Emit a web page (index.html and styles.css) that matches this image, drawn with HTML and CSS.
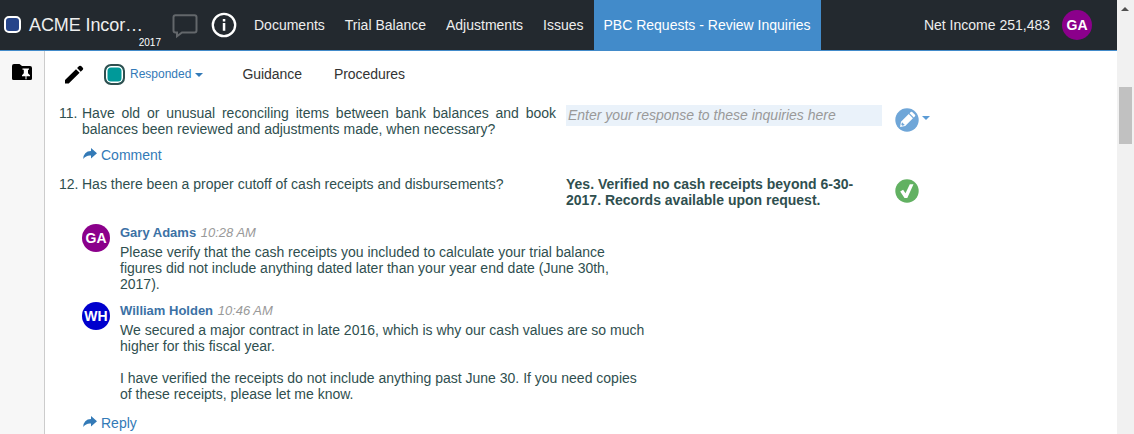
FILE: index.html
```html
<!DOCTYPE html>
<html lang="en">
<head>
<meta charset="utf-8">
<title>PBC Requests - Review Inquiries</title>
<link rel="stylesheet" href="styles.css">
</head>
<body>
<div class="app">
  <header class="topbar">
    <span class="entity-mark"></span>
    <div class="entity"><span class="entity-name">ACME Incor…</span><span class="entity-year">2017</span></div>
    <svg class="icon-chat" width="26" height="25" viewBox="0 0 26 25"><path d="M3.500 1.200h19q2 0 2 2v13.200q0 2-2 2H10L5 22.300V18.400H3.500q-2 0-2-2V3.200q0-2 2-2z" fill="none" stroke="#63676b" stroke-width="2"/></svg>
    <svg class="icon-info" width="26" height="26" viewBox="0 0 26 26"><circle cx="13" cy="13" r="11.200" fill="none" stroke="#fff" stroke-width="2.300"/><path d="M11.800 7h2.500v2.400h-2.500zM11.800 11.100h2.500v7.600h-2.500z" fill="#fff"/></svg>
    <nav class="nav">
      <a>Documents</a><a>Trial Balance</a><a>Adjustments</a><a>Issues</a><a class="active">PBC Requests - Review Inquiries</a>
    </nav>
    <span class="net-income">Net Income 251,483</span>
    <span class="avatar avatar-top">GA</span>
  </header>
  <div class="body">
    <aside class="sidebar">
      <svg width="20" height="17" viewBox="0 0 20 17"><path d="M2 0h5.500l2.500 2h8q2 0 2 2v10.500q0 1.500-1.500 1.500h-17Q0 16 0 14.500V2Q0 0 2 0z" fill="#000"/><path d="M10.500 4.500h6.500v1.200h-1v3.600l2 2v.9h-3.500v3h-1v-3H10v-.9l1.800-2V5.700h-1.300z" fill="#fff"/></svg>
    </aside>
    <main class="main">
      <div class="toolbar">
        <svg class="icon-pencil" width="19" height="19" viewBox="0 0 19 19"><path d="M0 14.900 11 4.200 14.600 7.800 3.700 18.500H0zM12.100 3.100l2-2q1-.9 2 0l1.700 1.700q.9 1 0 2l-2.100 1.900z" fill="#000"/></svg>
        <span class="status-swatch"></span>
        <span class="status-label">Responded</span><span class="caret"></span>
        <span class="tool guidance">Guidance</span><span class="tool">Procedures</span>
      </div>
      <section class="inquiry first">
        <span class="num">11.</span>
        <div class="question">Have old or unusual reconciling items between bank balances and book balances been reviewed and adjustments made, when necessary?</div>
        <div class="response placeholder">Enter your response to these inquiries here</div>
        <div class="state">
          <svg width="24" height="24" viewBox="0 0 24 24"><circle cx="12" cy="12" r="11.700" fill="#6fa6d8"/><g transform="translate(12 12) rotate(45)"><path d="M-3-8.300q0-1 1-1h4q1 0 1 1v1.700h-6zM-3-5.400h6V5.500L0 9.800l-3-4.300z" fill="#fff"/><path d="M-2 5.100h4L.7 7.300H-.7z" fill="#6fa6d8"/></g></svg>
          <span class="caret"></span>
        </div>
      </section>
      <a class="action"><svg width="14" height="12" viewBox="0 0 14 12"><path d="M8 0 14 5.300 8 10.600V7.500Q3 7 .2 11 .5 3.200 8 2.900z" fill="#337ab7"/></svg>Comment</a>
      <section class="inquiry second">
        <span class="num">12.</span>
        <div class="question">Has there been a proper cutoff of cash receipts and disbursements?</div>
        <div class="response answer">Yes. Verified no cash receipts beyond 6-30-<br>2017. Records available upon request.</div>
        <div class="state">
          <svg width="24" height="24" viewBox="0 0 24 24"><circle cx="12" cy="12" r="11.700" fill="#62b162"/><path d="M5.200 12.600l2.900-1.800 2.400 3.400 4.300-9h3.700L12.300 19H9.500z" fill="#fff"/></svg>
        </div>
      </section>
      <article class="comment">
        <span class="avatar">GA</span>
        <div class="comment-body">
          <div class="byline"><b>Gary Adams</b> <i>10:28 AM</i></div>
          <p>Please verify that the cash receipts you included to calculate your trial balance<br>figures did not include anything dated later than your year end date (June 30th,<br>2017).</p>
        </div>
      </article>
      <article class="comment">
        <span class="avatar avatar-blue">WH</span>
        <div class="comment-body">
          <div class="byline"><b>William Holden</b> <i>10:46 AM</i></div>
          <p>We secured a major contract in late 2016, which is why our cash values are so much<br>higher for this fiscal year.</p>
          <p>I have verified the receipts do not include anything past June 30. If you need copies<br>of these receipts, please let me know.</p>
        </div>
      </article>
      <a class="action"><svg width="14" height="12" viewBox="0 0 14 12"><path d="M8 0 14 5.300 8 10.600V7.500Q3 7 .2 11 .5 3.200 8 2.900z" fill="#337ab7"/></svg>Reply</a>
    </main>
  </div>
</div>
<div class="scrollbar"><span class="scroll-up"></span><span class="scroll-thumb"></span></div>
</body>
</html>
```
FILE: styles.css
```css
* { box-sizing: border-box; }
body {
  margin: 0;
  width: 1134px;
  height: 434px;
  display: flex;
  overflow: hidden;
  background: #fff;
  color: #2f4f4f;
  font: 14px/16px "Liberation Sans", Arial, sans-serif;
}
.app { width: 1117px; height: 434px; display: flex; flex-direction: column; }
.topbar {
  height: 51px;
  flex: none;
  display: flex;
  align-items: center;
  background: #23292f;
  border-bottom: 1px solid #428bca;
  color: #eee;
}
.entity-mark {
  width: 17px; height: 17px;
  margin: 0 8px 2px 4px;
  border: 2px solid #fff;
  border-radius: 5px;
  background: #27458a;
}
.entity { width: 132px; height: 50px; display: flex; flex-direction: column; padding-top: 15px; }
.entity-name { font-size: 18px; line-height: 20px; white-space: nowrap; letter-spacing: -0.1px; }
.entity-year { font-size: 10px; line-height: 12px; padding-top: 2px; align-self: flex-end; color: #fff; }
.icon-chat { margin: 3px 0 0 11px; }
.icon-info { margin: 0 0 0 13px; }
.nav { display: flex; height: 51px; align-self: flex-start; margin-left: 7px; }
.nav a { padding: 17px 10px 0; white-space: nowrap; }
.nav .active { background: #428bca; color: #fff; }
.net-income { margin-left: auto; }
.avatar {
  width: 28px; height: 28px;
  flex: none;
  display: flex;
  align-items: center;
  justify-content: center;
  border-radius: 50%;
  background: #8b008b;
  color: #fff;
  font-weight: bold;
}
.avatar-top { width: 30px; height: 30px; margin: 0 25px 0 12px; }
.avatar-blue { background: #0000cd; }
.body { flex: 1; display: flex; min-height: 0; }
.sidebar { width: 45px; background: #f7f7f7; border-right: 1px solid #ccc; padding: 13px 0 0 12px; }
.main { flex: 1; min-width: 0; }
.toolbar { display: flex; align-items: center; height: 46px; padding-left: 20px; color: #333; }
.status-swatch {
  width: 21px; height: 21px;
  margin-left: 20px;
  border: 2px solid #2f4f4f;
  border-radius: 7px;
  background: #009999;
  box-shadow: inset 0 0 0 1.5px #fff;
}
.status-label { margin-left: 5px; font-size: 12px; color: #337ab7; }
.caret { border: 4px solid transparent; border-top-color: #337ab7; border-bottom: 0; margin: 2px 0 0 4px; }
.guidance { margin-left: 39px; margin-right: 32px; }
.tool { letter-spacing: -0.05px; }
.inquiry { display: grid; grid-template-columns: 23px 474px 316px 40px; padding-left: 14px; }
.first { padding-top: 8px; height: 46px; }
.second { margin-top: 13px; height: 48px; }
.question { text-align: justify; }
.response { margin-left: 10px; width: 316px; }
.placeholder { height: 21px; padding: 2px; background: #eaf2fa; color: #999; font-style: italic; }
.answer { font-weight: bold; }
.state { display: flex; align-items: flex-start; padding: 3px 0 0 23px; }
.state svg { flex: none; }
.state .caret { margin: 8px 0 0 3px; border-top-color: #5b9bd5; }
.action { display: flex; gap: 4px; margin: 4px 0 0 38px; color: #337ab7; }
.action svg { margin-top: 1px; }
.comment { display: flex; gap: 10px; padding-left: 37px; }
.comment + .comment { margin-top: 10px; }
.byline { padding-top: 1px; margin-bottom: 3px; font-size: 13px; }
.byline b { color: #3c71a5; }
.byline i { color: #999; margin-left: 1px; }
p { margin: 0; }
p + p { margin-top: 16px; }
.comment + .action { margin-top: 13px; }
.scrollbar { width: 17px; height: 434px; background: #f1f1f1; display: flex; flex-direction: column; align-items: flex-start; }
.scroll-up { border: 4px solid transparent; border-bottom-color: #505050; border-top: 0; margin: 7px 0 0 4px; }
.scroll-thumb { width: 13px; height: 57px; margin: 76px 0 0 2px; background: #c1c1c1; }
```
